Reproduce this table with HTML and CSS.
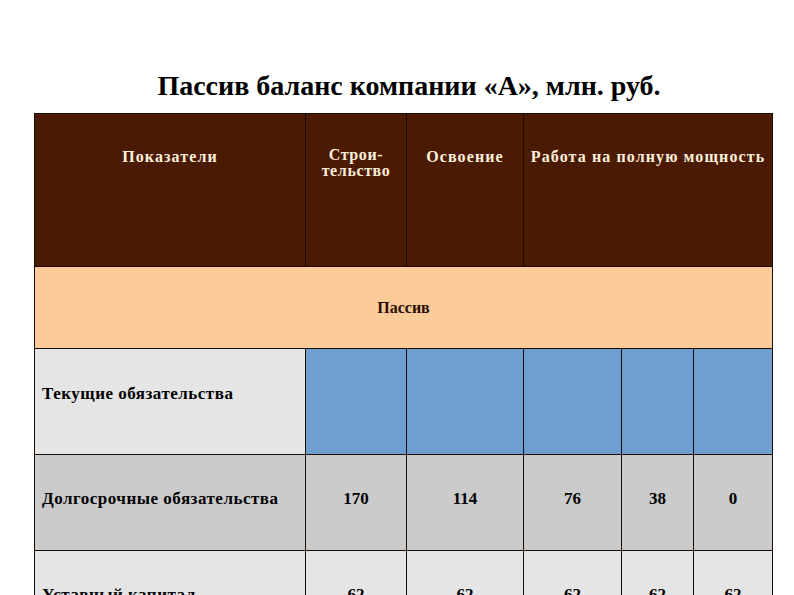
FILE: index.html
```html
<!DOCTYPE html>
<html lang="ru">
<head>
<meta charset="utf-8">
<title>Пассив баланс компании «А»</title>
<link rel="stylesheet" href="styles.css">
</head>
<body>
<div class="page">
  <h1 class="title">Пассив баланс компании «А», млн. руб.</h1>
  <table class="balance">
    <colgroup>
      <col class="c1"><col class="c2"><col class="c3"><col class="c4"><col class="c5"><col class="c6">
    </colgroup>
    <thead>
      <tr class="head">
        <th>Показатели</th>
        <th class="tight">Строи-<br>тельство</th>
        <th>Освоение</th>
        <th colspan="3">Работа на полную мощность</th>
      </tr>
    </thead>
    <tbody>
      <tr class="section"><td colspan="6">Пассив</td></tr>
      <tr class="row light r1">
        <td class="label">Текущие обязательства</td>
        <td class="blue"></td><td class="blue"></td><td class="blue"></td><td class="blue"></td><td class="blue"></td>
      </tr>
      <tr class="row dark r2">
        <td class="label">Долгосрочные обязательства</td>
        <td>170</td><td>114</td><td>76</td><td>38</td><td>0</td>
      </tr>
      <tr class="row light r3">
        <td class="label">Уставный капитал</td>
        <td>62</td><td>62</td><td>62</td><td>62</td><td>62</td>
      </tr>
    </tbody>
  </table>
</div>
</body>
</html>
```

FILE: styles.css
```css
html, body {
  margin: 0;
  padding: 0;
  background: #ffffff;
}
body {
  font-family: "Liberation Serif", "Times New Roman", serif;
  color: #000;
  overflow: hidden;
}
.page {
  width: 794px;
  height: 595px;
  overflow: hidden;
}
.title {
  margin: 0;
  padding: 70px 0 0 24px;
  height: 43px;
  box-sizing: content-box;
  font-size: 28px;
  font-weight: bold;
  text-align: center;
  line-height: 32px;
  white-space: nowrap;
}
.balance {
  margin-left: 34px;
  width: 738px;
  table-layout: fixed;
  border-collapse: collapse;
  font-weight: bold;
}
.c1 { width: 271px; }
.c2 { width: 101px; }
.c3 { width: 117px; }
.c4 { width: 98px; }
.c5 { width: 72px; }
.c6 { width: 79px; }

.balance th, .balance td {
  border: 1px solid #1a0c05;
  padding: 0;
}
.head th {
  height: 153px;
  background: #4b1a02;
  color: #fbefdc;
  font-size: 16px;
  letter-spacing: 1.1px;
  vertical-align: top;
  text-align: center;
  padding-top: 35px;
  box-sizing: border-box;
  line-height: 16px;
  white-space: nowrap;
}
.head th.tight { line-height: 16px; padding-top: 33px; letter-spacing: 0.6px; }

.section td {
  height: 81px;
  background: #fccb9a;
  color: #2a0d00;
  text-align: center;
  vertical-align: middle;
  font-size: 16px;
}
.row td {
  text-align: center;
  vertical-align: middle;
  font-size: 17px;
  padding-bottom: 8px;
  box-sizing: border-box;
}
.row td.label {
  text-align: left;
  padding-left: 7px;
  font-size: 17px;
  letter-spacing: 0.5px;
}
.r1 td { height: 106px; padding-bottom: 16px; }
.r2 td { height: 96px; }
.r3 td { height: 96px; }
.light td { background: #e5e5e5; }
.dark td { background: #cbcbcb; }
.light td.blue { background: #6f9ed1; }
```
